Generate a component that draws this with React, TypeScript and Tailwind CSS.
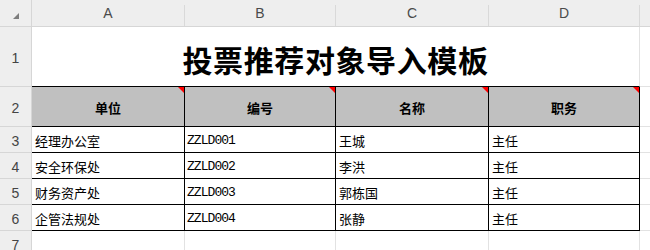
import React from 'react'

const cjk = "font-['Noto_Sans_CJK_SC',sans-serif]"
const ui = "font-['Liberation_Sans',Arial,sans-serif]"

const cols = ['A', 'B', 'C', 'D']
const headers = ['单位', '编号', '名称', '职务']
const rows = [
  { unit: '经理办公室', code: 'ZZLD001', name: '王城', title: '主任' },
  { unit: '安全环保处', code: 'ZZLD002', name: '李洪', title: '主任' },
  { unit: '财务资产处', code: 'ZZLD003', name: '郭栋国', title: '主任' },
  { unit: '企管法规处', code: 'ZZLD004', name: '张静', title: '主任' },
]

function RowHead({ n }: { n: number }) {
  return (
    <div className={`flex items-center justify-center border-r border-b border-[#d6d6d6] bg-[#eeeeee] pt-[3px] text-[14px] text-[#444] ${ui}`}>
      {n}
    </div>
  )
}

function ColHead({ label, sep = true }: { label: string; sep?: boolean }) {
  return (
    <div className="flex border-b border-[#d6d6d6] bg-[#eeeeee]">
      <span className={`flex-1 pt-[5px] text-center text-[14px] leading-[16px] text-[#4a4a4a] ${ui}`}>{label}</span>
      {sep && <span className="h-[21px] w-px self-end bg-[#d9d9d9]" />}
    </div>
  )
}

function Spare() {
  return <div className="border-b border-[#e2e2e2] bg-white" />
}

export default function App() {
  return (
    <div className="h-[250px] w-[650px] overflow-hidden bg-white">
      <div className="grid grid-cols-[32px_153px_151px_153px_151px_1fr] grid-rows-[27px_60px_40px_26px_26px_26px_26px_26px]">
        {/* corner */}
        <div className="flex items-end justify-end border-r border-b border-[#d6d6d6] bg-[#eeeeee] pr-[12px] pb-[7px]">
          <svg width="6" height="6" viewBox="0 0 6 6">
            <polygon points="6,0 6,6 0,6" fill="#7d7d7d" />
          </svg>
        </div>
        {cols.map((c) => (
          <ColHead key={c} label={c} />
        ))}
        <ColHead label="" sep={false} />

        {/* row 1: merged title */}
        <RowHead n={1} />
        <div className="col-span-4 flex items-center justify-center border-r border-b border-r-[#e2e2e2] border-b-black pt-[5px]">
          <span className={`text-[30px] font-bold leading-none tracking-[0.6px] text-black ${cjk}`}>投票推荐对象导入模板</span>
        </div>
        <Spare />

        {/* row 2: column titles */}
        <RowHead n={2} />
        {headers.map((h) => (
          <div key={h} className="relative flex items-center justify-center border-r border-b border-black bg-[#c0c0c0] pt-[3px]">
            <span className={`text-[13px] font-bold text-black ${cjk}`}>{h}</span>
            <svg className="absolute top-0 right-0" width="6" height="6" viewBox="0 0 6 6">
              <polygon points="0,0 6,0 6,6" fill="#ff0000" />
            </svg>
          </div>
        ))}
        <Spare />

        {rows.map((r, i) => (
          <React.Fragment key={r.code}>
            <RowHead n={i + 3} />
            <div className={`flex items-center border-r border-b border-black pt-[3px] pl-[3px] text-[13px] text-black ${cjk}`}>{r.unit}</div>
            <div className="flex items-center border-r border-b border-black pt-[3px] pl-[2px] font-['Liberation_Mono',monospace] text-[13px] tracking-[-0.95px] text-black">{r.code}</div>
            <div className={`flex items-center border-r border-b border-black pt-[3px] pl-[3px] text-[13px] text-black ${cjk}`}>{r.name}</div>
            <div className={`flex items-center border-r border-b border-black pt-[3px] pl-[3px] text-[13px] text-black ${cjk}`}>{r.title}</div>
            <Spare />
          </React.Fragment>
        ))}

        {/* row 7: empty */}
        <RowHead n={7} />
        {cols.map((c) => (
          <div key={c} className="border-r border-[#e2e2e2]" />
        ))}
        <div />
      </div>
    </div>
  )
}
